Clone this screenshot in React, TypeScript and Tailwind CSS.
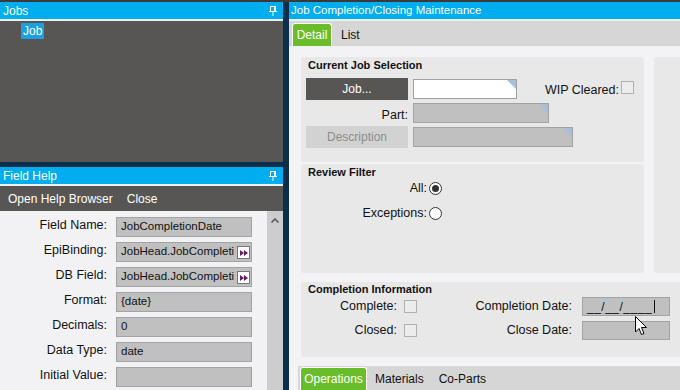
import React from "react";

const FONT = "font-['Liberation_Sans',Arial,sans-serif]";

function Pin() {
  return (
    <svg width="8" height="10" viewBox="0 0 8 10" className="block">
      <rect x="1.5" y="0.5" width="5" height="5" fill="none" stroke="white" strokeWidth="1" />
      <rect x="5" y="0" width="2" height="6" fill="white" />
      <rect x="0" y="5" width="8" height="1" fill="white" />
      <rect x="3.5" y="6" width="1" height="4" fill="white" />
    </svg>
  );
}

function PanelHeader({ title }: { title: string }) {
  return (
    <>
      <div className="h-[17px] bg-[#00adef] flex items-center justify-between pl-[3px] pr-[6px] text-white text-[12px] leading-none">
        <span>{title}</span>
        <Pin />
      </div>
      <div className="h-[2px] bg-[#f0f0f0]" />
    </>
  );
}

function Corner() {
  return (
    <svg width="9" height="9" viewBox="0 0 9 9" className="absolute top-0 right-0">
      <polygon points="0,0 9,0 9,9" fill="#a8bedc" />
    </svg>
  );
}

function GreyInput({ w, value, corner, white, h = 20 }: { w: number; value?: string; corner?: boolean; white?: boolean; h?: number }) {
  return (
    <div
      className={`relative border ${white ? "bg-white border-[#a0a0a0]" : "bg-[#c0c0c0] border-[#a3a3a3]"} shrink-0 text-[12px] text-[#111] flex items-center px-[4px]`}
      style={{ width: w, height: h }}
    >
      {value}
      {corner && <Corner />}
    </div>
  );
}

function Arrows() {
  return (
    <div className="absolute right-[1px] top-[3px] w-[13px] h-[13px] bg-white border border-[#777] flex items-center justify-center">
      <svg width="8" height="6" viewBox="0 0 8 6">
        <polygon points="0,0 4,3 0,6" fill="#6a1a5e" />
        <polygon points="4,0 8,3 4,6" fill="#6a1a5e" />
      </svg>
    </div>
  );
}

const HELP_ROWS = [
  { label: "Field Name:", value: "JobCompletionDate" },
  { label: "EpiBinding:", value: "JobHead.JobCompleti", arrows: true },
  { label: "DB Field:", value: "JobHead.JobCompleti", arrows: true },
  { label: "Format:", value: "{date}" },
  { label: "Decimals:", value: "0" },
  { label: "Data Type:", value: "date" },
  { label: "Initial Value:", value: "" },
];

function Checkbox() {
  return <div className="w-[13px] h-[13px] border border-[#b0b0b0] bg-[#ececec] shrink-0" />;
}

function Radio({ checked }: { checked?: boolean }) {
  return (
    <div className="w-[13px] h-[13px] rounded-full border border-[#333] bg-white flex items-center justify-center shrink-0">
      {checked && <div className="w-[7px] h-[7px] rounded-full bg-[#333]" />}
    </div>
  );
}

function Cursor() {
  return (
    <svg width="13" height="20" viewBox="0 0 13 20" className="absolute left-[635px] top-[316px]">
      <path d="M0.5 0.5 L0.5 16 L4 12.5 L6.5 18.5 L9 17.5 L6.5 11.5 L11.5 11.5 Z" fill="white" stroke="black" strokeWidth="1" strokeLinejoin="miter" />
    </svg>
  );
}

export default function App() {
  return (
    <div className={`w-[680px] h-[390px] overflow-hidden relative bg-[#3a3a3a] flex flex-col ${FONT}`}>
      <div className="h-[2px] bg-[#3a3a3a] shrink-0" />
      <div className="flex flex-1 min-h-0">
        {/* left column */}
        <div className="w-[283px] flex flex-col shrink-0">
          <PanelHeader title="Jobs" />
          <div className="h-[141px] bg-[#585654] pl-[21px] pt-[2px]">
            <div className="w-fit bg-[#1ba1e2] text-white text-[12px] leading-[16px] px-[2px]">Job</div>
          </div>
          <div className="h-[5px] bg-[#0b2e4a]" />
          <PanelHeader title="Field Help" />
          <div className="h-[25px] bg-[#585654] flex items-center gap-[14px] pl-[8px] text-white text-[12px]">
            <span>Open Help Browser</span>
            <span>Close</span>
          </div>
          <div className="flex-1 bg-[#f2f2f4] flex">
            <div className="flex-1 flex flex-col gap-[5px] pt-[6px]">
              {HELP_ROWS.map((r) => (
                <div key={r.label} className="flex items-center h-[20px]">
                  <div className="w-[107px] text-right text-[12.5px] text-[#111] leading-none pb-[3px]">{r.label}</div>
                  <div className="ml-[9px] relative w-[136px] h-[20px] bg-[#c0c0c0] border border-[#a3a3a3] text-[11.5px] text-[#111] flex items-center pl-[4px] whitespace-nowrap">
                    <span>{r.value}</span>
                    {r.arrows && <Arrows />}
                  </div>
                </div>
              ))}
            </div>
            <div className="w-[16px] bg-[#cdcdcd] flex justify-center pt-[7px]">
              <svg width="8" height="5" viewBox="0 0 8 5">
                <path d="M0.5 4.5 L4 1 L7.5 4.5" fill="none" stroke="#555" strokeWidth="1.5" />
              </svg>
            </div>
          </div>
        </div>
        {/* separator */}
        <div className="w-[6px] bg-[#0b2e4a] shrink-0" />
        {/* right column */}
        <div className="flex-1 flex flex-col min-w-0">
          <div className="h-[17px] bg-[#00adef] flex items-center pl-[2px] text-white text-[11.5px] leading-none">
            Job Completion/Closing Maintenance
          </div>
          <div className="h-[2px] bg-[#f0f0f0]" />
          <div className="h-[25px] bg-[#d6d6d6] flex items-end pl-[3px] text-[12px] text-[#111]">
            <div className="w-[40px] h-[23px] bg-[#69bd2a] border border-b-0 border-white rounded-t-[3px] text-white flex items-center justify-center">
              Detail
            </div>
            <div className="h-[23px] flex items-center ml-[9px]">List</div>
          </div>
          <div className="flex-1 bg-[#f3f3f5] flex flex-col pl-[12px] pt-[11px] overflow-hidden">
            <div className="flex gap-[10px]">
              <div className="w-[343px] flex flex-col gap-[2px] shrink-0">
                {/* Current Job Selection */}
                <div className="h-[105px] bg-[#e8e8e8] rounded-[3px] flex flex-col">
                  <div className="pl-[7px] pt-[1px] text-[11px] font-bold text-[#111] leading-[14px]">Current Job Selection</div>
                  <div className="flex flex-col gap-[2px] mt-[6px] pl-[5px]">
                    <div className="flex items-center h-[22px]">
                      <div className="w-[102px] h-[22px] bg-[#585654] text-white text-[12px] flex items-center justify-center">Job...</div>
                      <div className="ml-[5px]">
                        <GreyInput w={104} white corner />
                      </div>
                      <div className="ml-auto mr-[10px] flex items-start gap-[2px] text-[12.5px] text-[#111]">
                        <span className="leading-[14px] mt-[2px]">WIP Cleared:</span>
                        <Checkbox />
                      </div>
                    </div>
                    <div className="flex items-center h-[22px]">
                      <div className="w-[102px] text-right text-[12.5px] text-[#111] leading-none pt-[4px]">Part:</div>
                      <div className="ml-[5px]">
                        <GreyInput w={136} corner />
                      </div>
                    </div>
                    <div className="flex items-center h-[22px]">
                      <div className="w-[102px] h-[22px] bg-[#d2d2d2] text-[#8c8c8c] text-[12px] flex items-center justify-center">Description</div>
                      <div className="ml-[5px]">
                        <GreyInput w={160} corner />
                      </div>
                    </div>
                  </div>
                </div>
                {/* Review Filter */}
                <div className="h-[109px] bg-[#e8e8e8] rounded-[3px] flex flex-col">
                  <div className="pl-[7px] pt-[1px] text-[11px] font-bold text-[#111] leading-[14px]">Review Filter</div>
                  <div className="flex flex-col gap-[13px] mt-[3px]">
                    <div className="flex items-center h-[12px]">
                      <div className="w-[126px] text-right text-[12.5px] text-[#111] leading-none">All:</div>
                      <div className="ml-[2px]"><Radio checked /></div>
                    </div>
                    <div className="flex items-center h-[12px]">
                      <div className="w-[126px] text-right text-[12.5px] text-[#111] leading-none">Exceptions:</div>
                      <div className="ml-[2px]"><Radio /></div>
                    </div>
                  </div>
                </div>
              </div>
              <div className="w-[60px] h-[216px] bg-[#e8e8e8] rounded-[3px] shrink-0" />
            </div>
            {/* Completion Information */}
            <div className="mt-[9px] w-[420px] h-[75px] bg-[#e8e8e8] rounded-[3px] flex flex-col shrink-0">
              <div className="pl-[7px] text-[11px] font-bold text-[#111] leading-[14px]">Completion Information</div>
              <div className="flex flex-col gap-[5px] mt-[1px]">
                <div className="flex items-center h-[19px]">
                  <div className="w-[96px] text-right text-[12.5px] text-[#111] leading-none">Complete:</div>
                  <div className="ml-[7px]"><Checkbox /></div>
                  <div className="w-[155px] text-right text-[12.5px] text-[#111] leading-none">Completion Date:</div>
                  <div className="ml-[10px] relative w-[88px] h-[19px] bg-[#c0c0c0] border border-[#a3a3a3] flex items-center pl-[4px] text-[12px] text-[#111]">
                    <span className="leading-none tracking-[0.5px]">__/__/____</span>
                    <div className="w-[1px] h-[13px] bg-[#111] ml-[2px]" />
                  </div>
                </div>
                <div className="flex items-center h-[19px]">
                  <div className="w-[96px] text-right text-[12.5px] text-[#111] leading-none">Closed:</div>
                  <div className="ml-[7px]"><Checkbox /></div>
                  <div className="w-[155px] text-right text-[12.5px] text-[#111] leading-none">Close Date:</div>
                  <div className="ml-[10px] w-[88px] h-[19px] bg-[#c0c0c0] border border-[#a3a3a3]" />
                </div>
              </div>
            </div>
          </div>
          <div className="h-[24px] bg-[#f3f3f5] pl-[9px] flex">
            <div className="flex-1 bg-[#d6d6d6] flex items-end pl-[2px] text-[12px] text-[#111]">
              <div className="w-[67px] h-[23px] bg-[#69bd2a] border border-b-0 border-white rounded-t-[3px] text-white flex items-center justify-center">
                Operations
              </div>
              <div className="h-[23px] flex items-center ml-[8px]">Materials</div>
              <div className="h-[23px] flex items-center ml-[15px]">Co-Parts</div>
            </div>
          </div>
        </div>
      </div>
      <Cursor />
    </div>
  );
}
